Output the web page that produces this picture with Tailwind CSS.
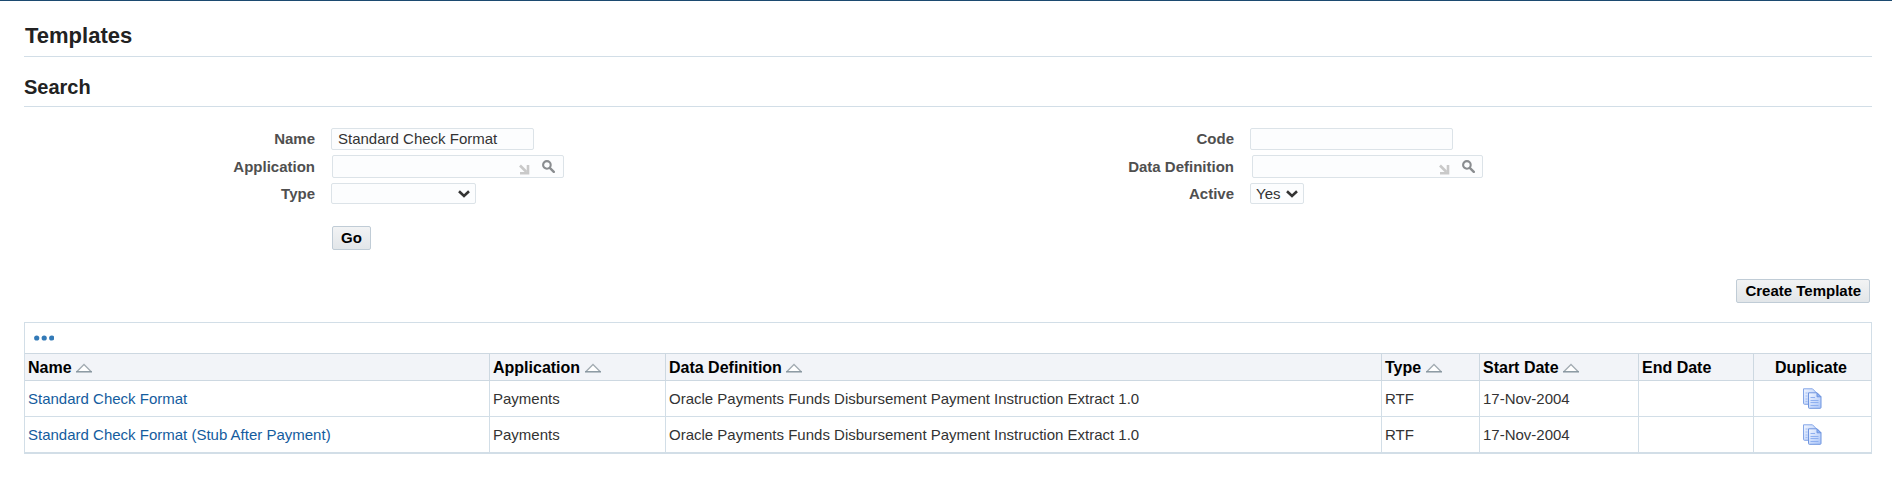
<!DOCTYPE html>
<html lang="en">
<head>
<meta charset="utf-8">
<title>Templates</title>
<script src="https://cdn.jsdelivr.net/npm/@tailwindcss/browser@4"></script>
</head>
<body class="border-t border-[#1c4a70] bg-white pt-[21px] pr-5 pl-6 font-['Liberation_Sans',Arial,sans-serif] text-[15px] leading-5 text-[#333333]">
<svg class="absolute size-0" aria-hidden="true">
  <defs>
    <linearGradient id="sheet" x1="0" y1="0" x2="1" y2="1"><stop offset="0" stop-color="#f2f6ff"/><stop offset="1" stop-color="#a9c4f8"/></linearGradient>
    <symbol id="sort" viewBox="0 0 16 10"><path d="M1 8.5 8 1.5l7 7" fill="#fff" stroke="#a3acb3" stroke-width="1.3"/><path d="M0 8.8h16" stroke="#82919b" stroke-width="1.4"/></symbol>
    <symbol id="glass" viewBox="0 0 13 13"><circle cx="4.9" cy="4.9" r="3.8" fill="none" stroke="#8a8d90" stroke-width="2.1"/><path d="m7.8 7.8 4 4" stroke="#8a8d90" stroke-width="2.4" stroke-linecap="round"/></symbol>
    <symbol id="corner" viewBox="0 0 11 11"><path d="M1 1.500 7.500 8" stroke="#c9c9c9" stroke-width="2.6"/><path d="M9 1v8.300H1" fill="none" stroke="#c9c9c9" stroke-width="2.6"/></symbol>
    <symbol id="chevron" viewBox="0 0 12 8"><path d="m1 1.300 5 4.700 5-4.700" fill="none" stroke="#333" stroke-width="2.6"/></symbol>
    <symbol id="copy" viewBox="0 0 20 21"><path d="M1.500.8h9l3.500 3.500v12H2.500a1 1 0 0 1-1-1Z" fill="url(#sheet)" stroke="#84a6e8"/><path d="M3.500 5h2M3.500 8h2M3.500 11h2M3.500 13.500h2" stroke="#a3bef2"/><path d="M6.500 4.800h8.500l4 4v10.700a.8.8 0 0 1-.8.8H7.300a.8.8 0 0 1-.8-.8Z" fill="url(#sheet)" stroke="#6f95df"/><path d="M15 4.800v4h4Z" fill="#8fb1f3" stroke="#6f95df"/><path d="M8.500 9.500h4.500M8.500 12.500h8M8.500 14.500h8M8.500 17.500h8" stroke="#8fb0f0"/></symbol>
  </defs>
</svg>
<main>
  <h1 class="border-b border-[#d2dee7] pb-1.5 pl-px text-[22px] leading-7 font-bold text-[#222222]">Templates</h1>
  <h2 class="border-b border-[#d2dee7] pt-[18px] pb-1.5 text-[20px] leading-[25px] font-bold text-[#222222]">Search</h2>

  <form class="mt-5">
    <div class="grid grid-cols-[919fr_929fr]">
      <div class="flex flex-col">
        <div class="flex h-7 items-start">
          <label for="name" class="mt-0.5 w-[291px] text-right font-bold text-[#4f4f4f]">Name</label>
          <input id="name" type="text" value="Standard Check Format" class="mt-px ml-4 h-[22px] w-[203px] rounded-xs border border-[#dce3e8] bg-[#fcfdfe] px-1.5 pb-0.5">
        </div>
        <div class="flex h-7 items-start">
          <label for="app" class="mt-0.5 w-[291px] text-right font-bold text-[#4f4f4f]">Application</label>
          <div class="ml-[17px] flex h-[23px] w-[232px] items-center rounded-xs border border-[#dce3e8] bg-[#fcfdfe]">
            <input id="app" type="text" class="h-full min-w-0 flex-1 bg-transparent px-1.5">
            <svg class="mt-1.5 h-[11px] w-[11px]" aria-hidden="true"><use href="#corner"/></svg>
            <button type="button" aria-label="Search for application" class="mr-2 mb-px ml-3"><svg class="block h-[13px] w-[13px]"><use href="#glass"/></svg></button>
          </div>
        </div>
        <div class="flex h-7 items-start">
          <label for="type" class="mt-px w-[291px] text-right font-bold text-[#4f4f4f]">Type</label>
          <div class="relative ml-4">
            <select id="type" class="block h-[21px] w-[145px] appearance-none rounded-xs border border-[#dce3e8] bg-[#fcfdfe] pl-[5px] leading-[19px]"><option></option><option>RTF</option></select>
            <svg class="pointer-events-none absolute top-[7px] right-1.5 h-2 w-3" aria-hidden="true"><use href="#chevron"/></svg>
          </div>
        </div>
      </div>
      <div class="flex flex-col">
        <div class="flex h-7 items-start">
          <label for="code" class="mt-0.5 w-[291px] text-right font-bold text-[#4f4f4f]">Code</label>
          <input id="code" type="text" class="mt-px ml-4 h-[22px] w-[203px] rounded-xs border border-[#dce3e8] bg-[#fcfdfe] px-1.5 pb-0.5">
        </div>
        <div class="flex h-7 items-start">
          <label for="dd" class="mt-0.5 w-[291px] text-right font-bold text-[#4f4f4f]">Data Definition</label>
          <div class="ml-[18px] flex h-[23px] w-[231px] items-center rounded-xs border border-[#dce3e8] bg-[#fcfdfe]">
            <input id="dd" type="text" class="h-full min-w-0 flex-1 bg-transparent px-1.5">
            <svg class="mt-1.5 h-[11px] w-[11px]" aria-hidden="true"><use href="#corner"/></svg>
            <button type="button" aria-label="Search for data definition" class="mr-[7px] mb-px ml-3"><svg class="block h-[13px] w-[13px]"><use href="#glass"/></svg></button>
          </div>
        </div>
        <div class="flex h-7 items-start">
          <label for="active" class="mt-px w-[291px] text-right font-bold text-[#4f4f4f]">Active</label>
          <div class="relative ml-4">
            <select id="active" class="block h-[21px] w-[54px] appearance-none rounded-xs border border-[#dce3e8] bg-[#fcfdfe] pl-[5px] leading-[19px]"><option>Yes</option><option>No</option></select>
            <svg class="pointer-events-none absolute top-[7px] right-1.5 h-2 w-3" aria-hidden="true"><use href="#chevron"/></svg>
          </div>
        </div>
      </div>
    </div>
    <button type="button" class="mt-[15px] ml-[308px] block h-6 rounded-xs border border-[#c0ccd6] bg-linear-to-b from-[#f2f3f4] to-[#e2e6e9] px-2 leading-[22px] font-bold text-black">Go</button>
  </form>

  <div class="mt-[29px] flex justify-end pr-0.5">
    <button type="button" class="h-6 rounded-xs border border-[#c0ccd6] bg-linear-to-b from-[#f2f3f4] to-[#e2e6e9] px-2 leading-[22px] font-bold text-black">Create Template</button>
  </div>

  <section class="mt-[19px] border border-b-2 border-[#d2dee7]">
    <div class="flex h-[30px] items-center pl-[9px]">
      <button type="button" aria-label="More actions"><svg class="block h-1.5 w-5" viewBox="0 0 20 6" fill="#337ab7"><circle cx="2.700" cy="3" r="2.600"/><circle cx="10.200" cy="3" r="2.600"/><circle cx="17.700" cy="3" r="2.600"/></svg></button>
    </div>
    <table class="w-full table-fixed border-separate border-spacing-0 text-left">
      <colgroup><col style="width:25.190%"><col style="width:9.534%"><col style="width:38.787%"><col style="width:5.309%"><col style="width:8.613%"><col style="width:6.230%"><col></colgroup>
      <thead class="bg-[#f2f4f8] text-[16px] text-black">
        <tr class="h-7 *:border-y *:border-r *:border-[#cdd8e1] *:pt-0.5 *:pl-[3px] *:last:border-r-0">
          <th>Name <svg class="inline-block h-2.5 w-4 align-baseline" aria-hidden="true"><use href="#sort"/></svg></th>
          <th>Application <svg class="inline-block h-2.5 w-4 align-baseline" aria-hidden="true"><use href="#sort"/></svg></th>
          <th>Data Definition <svg class="inline-block h-2.5 w-4 align-baseline" aria-hidden="true"><use href="#sort"/></svg></th>
          <th>Type <svg class="inline-block h-2.5 w-4 align-baseline" aria-hidden="true"><use href="#sort"/></svg></th>
          <th>Start Date <svg class="inline-block h-2.5 w-4 align-baseline" aria-hidden="true"><use href="#sort"/></svg></th>
          <th>End Date</th>
          <th class="pr-1.5 text-center">Duplicate</th>
        </tr>
      </thead>
      <tbody>
        <tr class="h-9 *:border-r *:border-b *:border-[#d2dee7] *:pl-[3px] *:last:border-r-0">
          <td><a href="#" class="text-[#145c9e]">Standard Check Format</a></td>
          <td>Payments</td>
          <td>Oracle Payments Funds Disbursement Payment Instruction Extract 1.0</td>
          <td>RTF</td>
          <td>17-Nov-2004</td>
          <td></td>
          <td class="pr-1"><button type="button" aria-label="Duplicate" class="mx-auto block"><svg class="block h-[21px] w-5"><use href="#copy"/></svg></button></td>
        </tr>
        <tr class="h-[35px] *:border-r *:border-[#d2dee7] *:pl-[3px] *:last:border-r-0">
          <td><a href="#" class="text-[#145c9e]">Standard Check Format (Stub After Payment)</a></td>
          <td>Payments</td>
          <td>Oracle Payments Funds Disbursement Payment Instruction Extract 1.0</td>
          <td>RTF</td>
          <td>17-Nov-2004</td>
          <td></td>
          <td class="pr-1"><button type="button" aria-label="Duplicate" class="mx-auto block"><svg class="block h-[21px] w-5"><use href="#copy"/></svg></button></td>
        </tr>
      </tbody>
    </table>
  </section>
</main>
</body>
</html>
